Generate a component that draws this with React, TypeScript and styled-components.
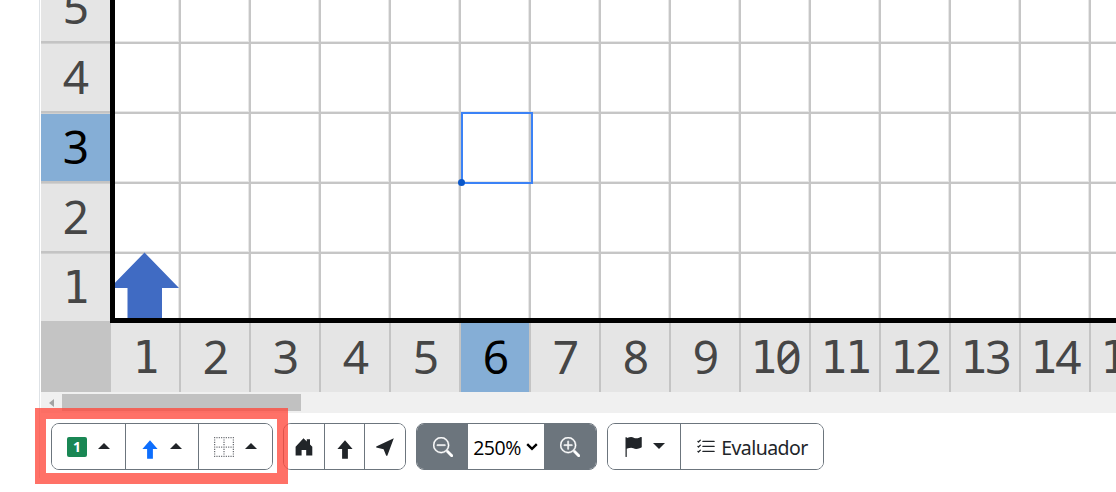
import React from 'react';
import styled, { createGlobalStyle } from 'styled-components';
import { BsBorder, BsFlagFill, BsListCheck, BsZoomIn, BsZoomOut } from 'react-icons/bs';

const GlobalStyle = createGlobalStyle`
  * { box-sizing: border-box; }
  body { margin: 0; background: #fff; overflow: hidden; font-family: 'Noto Sans', sans-serif; color: #212529; }
`;

const CELL = 70;

const Page = styled.main`
  width: 1116px;
  height: 492px;
  padding-left: 39px;
  overflow: hidden;
`;

const Panel = styled.section`
  height: 478px;
  border-left: 1px solid #dee2e6;
  padding-left: 1px;
`;

const Board = styled.div`
  display: grid;
  grid-template-columns: 69px 1fr;
  grid-template-rows: 322px 70px;
  height: 392px;
  overflow: hidden;
`;

const RowHeads = styled.div`
  display: flex;
  flex-direction: column;
  justify-content: flex-end;
  background: #e5e5e5;
  overflow: hidden;
`;

const label = (active?: boolean) => `
  display: flex;
  justify-content: center;
  align-items: center;
  flex: none;
  background-color: ${active ? '#85aed6' : '#e5e5e5'};
  color: ${active ? '#000' : '#464646'};
`;

const RowHead = styled.div<{ $active?: boolean }>`
  ${p => label(p.$active)}
  height: ${CELL}px;
  padding-left: 1px;
  padding-bottom: 1px;
  box-shadow: inset 0 1px #c4c4c4, inset 0 2px #d0d0d0, inset 0 -1px #c4c4c4;
`;

const ColHead = styled.div<{ $active?: boolean }>`
  ${p => label(p.$active)}
  width: ${CELL}px;
  box-shadow: inset -2px 0 #c4c4c4;
`;

const Digit = styled.span<{ $foot: boolean }>`
  display: inline-flex;
  justify-content: center;
  width: 24.7px;
  line-height: 50px;
  padding-top: ${p => (p.$foot ? 2 : 0)}px;
  padding-bottom: ${p => (p.$foot ? 0 : 2)}px;
  font-family: ${p => (p.$foot ? "'DejaVu Sans Mono', monospace" : "'Noto Sans', sans-serif")};
  font-size: ${p => (p.$foot ? 44.5 : 46)}px;
  font-feature-settings: 'zero';
`;

const Cells = styled.div`
  position: relative;
  height: 323px;
  border-left: 5px solid #000;
  border-bottom: 5px solid #000;
  overflow: hidden;
  z-index: 1;
  background:
    repeating-linear-gradient(to right, transparent 0 64px, #c6c6c6 64px 66px, transparent 66px 70px),
    repeating-linear-gradient(to bottom, transparent 0 42px, #c6c6c6 42px 44px, transparent 44px 70px),
    repeating-linear-gradient(to right, transparent 0 63px, #e8e8e8 63px 66px, transparent 66px 70px),
    repeating-linear-gradient(to bottom, transparent 0 41px, #e8e8e8 41px 44px, transparent 44px 70px),
    #fff;
`;

const Turtle = styled.svg`
  position: absolute;
  left: -5px;
  bottom: 0;
`;

const Selection = styled.div`
  position: absolute;
  left: 346px;
  top: 112px;
  width: 72px;
  height: 72px;
  border: 2px solid #3b82f6;
  &::after {
    content: '';
    position: absolute;
    left: -5px;
    bottom: -4px;
    width: 7px;
    height: 7px;
    border-radius: 50%;
    background: #0b57c9;
  }
`;

const Corner = styled.div`
  background: #c4c4c4;
`;

const ColHeads = styled.div`
  display: flex;
  padding-left: 1px;
  background: #c4c4c4;
  overflow: hidden;
`;

const Scrollbar = styled.div`
  display: flex;
  align-items: center;
  height: 21px;
  padding-left: 8px;
  gap: 8px;
  background: #f0f0f0;
`;
const ScrollArrow = styled.span`
  border: solid transparent;
  border-width: 4.5px 5px 4.5px 0;
  border-right-color: #a3a3a3;
`;
const Thumb = styled.span`
  width: 239px;
  height: 17px;
  background: #c1c1c1;
`;

const Toolbar = styled.div`
  display: flex;
  gap: 10px;
  padding: 10px 0 0 10px;
`;

const Group = styled.div`
  display: flex;
  height: 47px;
  border: 1px solid #6c757d;
  border-radius: 8px;
  overflow: hidden;
  background: #fff;
`;

const Button = styled.button<{ $width: number; $dark?: boolean; $gap?: number }>`
  display: flex;
  align-items: center;
  justify-content: center;
  gap: ${p => p.$gap ?? 11}px;
  width: ${p => p.$width}px;
  padding: 0;
  border: 0;
  background: ${p => (p.$dark ? '#6c757d' : '#fff')};
  color: ${p => (p.$dark ? '#fff' : '#212529')};
  font: 19.5px 'Noto Sans', sans-serif;
  & + & { border-left: 1px solid #6c757d; }
`;

const ZoomButton = styled(Button)`
  svg { stroke: #fff; stroke-width: 0.3; }
`;

const Caret = styled.span<{ $down?: boolean }>`
  border: solid transparent;
  border-width: ${p => (p.$down ? '6px 6px 0' : '0 6px 6px')};
  border-top-color: ${p => (p.$down ? '#212529' : 'transparent')};
  border-bottom-color: ${p => (p.$down ? 'transparent' : '#212529')};
  margin-bottom: 1px;
`;

const Badge = styled.span`
  width: 20px;
  height: 20px;
  border-radius: 2px;
  background: #198754;
  color: #fff;
  font: bold 14px/20px 'Noto Sans', sans-serif;
  text-align: center;
`;

const DottedGrid = styled(BsBorder)`
  color: #6b6e73;
`;

const Zoom = styled.div`
  display: flex;
  align-items: center;
  justify-content: center;
  gap: 5px;
  width: 76px;
  padding-right: 1px;
  color: #000;
  font: 19.5px 'Open Sans', sans-serif;
  letter-spacing: -0.5px;
`;

const ZoomValue = styled.span`
  padding-top: 1px;
`;

const EvalText = styled.span`
  padding-top: 2px;
  font-size: 19.5px;
  letter-spacing: -0.55px;
`;

const Highlight = styled.div`
  position: absolute;
  left: 35px;
  top: 408px;
  width: 253px;
  height: 76px;
  border: 11px solid rgba(255, 73, 60, 0.78);
`;

const ArrowIcon = styled.svg`
  margin-top: 6px;
`;

const ArrowUp = ({ color }: { color: string }) => (
  <ArrowIcon width="16" height="19" viewBox="0 0 16 19" fill={color}>
    <path d="M8 .3 15.6 9H10.9V18.8H5.1V9H.4Z" />
  </ArrowIcon>
);

const House = () => (
  <svg width="18" height="18" viewBox="0 0 18 18" fill="currentColor">
    <path d="M8.5.3 11.8 3.4V1.2H15V6.4L17.3 8.7V17.6H11.2V12H6.6V17.6H.6V8.7Z" />
  </svg>
);

const Pointer = () => (
  <svg width="18" height="18" viewBox="0 0 18 18" fill="currentColor">
    <path d="M17.8.2.2 8.5V9.4L7.6 11.2 10.2 17.8H11.3Z" />
  </svg>
);

const Digits = ({ value }: { value: number }) => (
  <>{String(value).split('').map((d, i) => <Digit key={i} $foot={d === '1'}>{d}</Digit>)}</>
);

export default function App() {
  return (
    <Page>
      <GlobalStyle />
      <Panel>
        <Board>
          <RowHeads>
            {[5, 4, 3, 2, 1].map(n => <RowHead key={n} $active={n === 3}><Digits value={n} /></RowHead>)}
          </RowHeads>
          <Cells>
            <Turtle width="70" height="66" viewBox="0 0 70 66" fill="#406bc3">
              <path d="M34.5 0.5 69 36H52V66H17.5V36H0Z" />
            </Turtle>
            <Selection />
          </Cells>
          <Corner />
          <ColHeads>
            {Array.from({ length: 15 }, (_, i) => i + 1).map(n => (
              <ColHead key={n} $active={n === 6}><Digits value={n} /></ColHead>
            ))}
          </ColHeads>
        </Board>
        <Scrollbar><ScrollArrow /><Thumb /></Scrollbar>
        <Toolbar>
          <Group>
            <Button $width={73}><Badge>1</Badge><Caret /></Button>
            <Button $width={73} $gap={12}><ArrowUp color="#0d6efd" /><Caret /></Button>
            <Button $width={74}><DottedGrid size={20} /><Caret /></Button>
          </Group>
          <Group>
            <Button $width={40}><House /></Button>
            <Button $width={40}><ArrowUp color="#212529" /></Button>
            <Button $width={41}><Pointer /></Button>
          </Group>
          <Group>
            <ZoomButton $width={51} $dark><BsZoomOut size={20} /></ZoomButton>
            <Zoom>
              <ZoomValue>250%</ZoomValue>
              <svg width="12" height="8" viewBox="0 0 12 8" fill="none" stroke="#000" strokeWidth="2.4"><path d="m1.2 1.2 4.8 4.6 4.8-4.6" /></svg>
            </Zoom>
            <ZoomButton $width={52} $dark><BsZoomIn size={20} /></ZoomButton>
          </Group>
          <Group>
            <Button $width={72} $gap={10}><BsFlagFill size={20} /><Caret $down /></Button>
            <Button $width={143} $gap={5}><BsListCheck size={20} /><EvalText>Evaluador</EvalText></Button>
          </Group>
        </Toolbar>
      </Panel>
      <Highlight />
    </Page>
  );
}
